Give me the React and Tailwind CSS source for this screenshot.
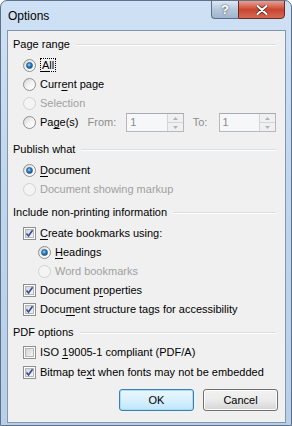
import React from 'react';

const FONT = "font-['Liberation_Sans',Arial,sans-serif]";

function Radio({ checked, disabled }) {
  return (
    <span
      className={`relative flex items-center justify-center w-[13px] h-[13px] shrink-0 rounded-full border ${
        disabled ? 'border-[#cfd2d4] bg-[#f4f4f4]' : 'border-[#8e8f8f] bg-gradient-to-br from-[#d4d4d4] via-[#f4f4f4] to-white'
      }`}
    >
      {checked && (
        <span className="w-[7px] h-[7px] rounded-full bg-[radial-gradient(circle_at_40%_35%,#9fd3f3_0%,#2d7fc0_45%,#0f3f76_100%)] border border-[#1f5b93]" />
      )}
    </span>
  );
}

function Check({ checked }) {
  return (
    <span className="flex items-center justify-center w-[13px] h-[13px] shrink-0 border border-[#8e8f8f] bg-white">
      <span className="relative w-[9px] h-[9px] border border-[#b4b6b8] bg-gradient-to-br from-[#d2d4d6] to-[#f6f6f6]">
        {checked && (
          <svg viewBox="0 0 9 9" className="absolute -left-px -top-px w-[9px] h-[9px]">
            <path d="M1.5 4.5 L3.5 7 L7.6 1.2" fill="none" stroke="#35489a" strokeWidth="1.6" />
          </svg>
        )}
      </span>
    </span>
  );
}

function Header({ children, gap }) {
  return (
    <div className={`flex items-center h-[18px] ${gap}`}>
      <span className="text-black">{children}</span>
      <span className="flex-1 ml-[6px] h-px bg-[#d5dfe5] shadow-[0_1px_0_#fff]" />
    </div>
  );
}

function Row({ indent = 'ml-[10px]', mt = '', children, control }) {
  return (
    <div className={`flex items-center h-[19px] ${indent} ${mt}`}>
      {control}
      <span className="ml-[4px] whitespace-nowrap">{children}</span>
    </div>
  );
}

function U({ children }) {
  return <span className="underline underline-offset-[2px]">{children}</span>;
}

function Spin() {
  return (
    <div className="flex w-[58px] h-[19px] border border-[#b5b9bd] border-t-[#a6abb1] bg-[#f6f7f8]">
      <span className="flex-1 pl-[3px] text-[#8a8a8a] leading-[17px]">1</span>
      <span className="flex flex-col w-[16px] border-l border-[#d3d6d9] bg-[#f0f0f0]">
        <span className="flex-1 flex items-center justify-center border-b border-[#d3d6d9]">
          <svg viewBox="0 0 5 3" className="w-[5px] h-[3px]"><path d="M0 3 L2.5 0 L5 3Z" fill="#b0b4b8" /></svg>
        </span>
        <span className="flex-1 flex items-center justify-center">
          <svg viewBox="0 0 5 3" className="w-[5px] h-[3px]"><path d="M0 0 L2.5 3 L5 0Z" fill="#b0b4b8" /></svg>
        </span>
      </span>
    </div>
  );
}

export default function App() {
  return (
    <div className={`${FONT} text-[11px] w-[292px] h-[426px] overflow-hidden flex flex-col rounded-t-[7px] border border-[#5d7189] bg-gradient-to-b from-[#cfe1f4] via-[#bed5ee] to-[#b7cfe9]`}>
      {/* Title bar */}
      <div className="flex h-[29px] shrink-0">
        <span className="ml-[7px] mt-[6px] text-[12px] text-black">Options</span>
        <div className="ml-auto mr-[6px] flex h-[19px] -mt-px">
          <div className="w-[27px] flex items-center justify-center border border-[#5b6f86] border-r-0 rounded-bl-[4px] bg-gradient-to-b from-[#dce8f4] via-[#b5c7dc] to-[#9fb6d0] text-white font-bold text-[13px] [text-shadow:0_0_2px_#333]">
            ?
          </div>
          <div className="w-[47px] flex items-center justify-center border border-[#6b2a22] rounded-br-[4px] bg-gradient-to-b from-[#e8a093] via-[#c9452f] to-[#d46a53]">
            <svg viewBox="0 0 12 10" className="w-[12px] h-[10px]">
              <path d="M1.5 1 L10.5 9 M10.5 1 L1.5 9" stroke="#4a1a12" strokeWidth="3.4" strokeLinecap="round" />
              <path d="M1.5 1 L10.5 9 M10.5 1 L1.5 9" stroke="#fff" strokeWidth="2.2" strokeLinecap="round" />
            </svg>
          </div>
        </div>
      </div>

      {/* Client area */}
      <div className="ml-[6px] mr-[5px] h-[393px] border border-[#8396ad] bg-[#f0f0f0] pl-[5px] pr-[9px] text-black">
        <Header gap="mt-[4px]">Page range</Header>
        <Row mt="mt-[3px]" control={<Radio checked />}>
          <span className="px-px border border-dotted border-black leading-[15px]"><U>A</U>ll</span>
        </Row>
        <Row control={<Radio />}>Curr<U>e</U>nt page</Row>
        <Row control={<Radio disabled />}><span className="text-[#a0a0a0]">Selection</span></Row>
        <div className="flex items-center h-[19px] ml-[10px]">
          <Radio />
          <span className="ml-[4px] w-[48px]">Pa<U>g</U>e(s)</span>
          <span className="w-[39px] text-[#8d8d8d]">From:</span>
          <Spin />
          <span className="ml-[9px] w-[26px] text-[#8d8d8d]">To:</span>
          <Spin />
        </div>

        <Header gap="mt-[8px]">Publish what</Header>
        <Row mt="mt-[3px]" control={<Radio checked />}><U>D</U>ocument</Row>
        <Row control={<Radio disabled />}><span className="text-[#a0a0a0]">Document showing markup</span></Row>

        <Header gap="mt-[4px]">Include non-printing information</Header>
        <Row mt="mt-[3px]" control={<Check checked />}><U>C</U>reate bookmarks using:</Row>
        <Row indent="ml-[25px]" control={<Radio checked />}><U>H</U>eadings</Row>
        <Row indent="ml-[25px]" control={<Radio disabled />}><span className="text-[#a0a0a0]">Word bookmarks</span></Row>
        <Row control={<Check checked />}>Document p<U>r</U>operties</Row>
        <Row control={<Check checked />}>Docu<U>m</U>ent structure tags for accessibility</Row>

        <Header gap="mt-[4px]">PDF options</Header>
        <Row mt="mt-[2px]" control={<Check />}>ISO <U>1</U>9005-1 compliant (PDF/A)</Row>
        <Row mt="mt-[1px]" control={<Check checked />}>Bitmap te<U>x</U>t when fonts may not be embedded</Row>

        <div className="flex justify-end gap-[9px] mt-[7px] -mr-[2px]">
          <button className="w-[75px] h-[22px] rounded-[3px] border border-[#3c7fb1] bg-gradient-to-b from-[#eaf6fd] via-[#d9f0fc] to-[#bee6fd] shadow-[inset_0_0_0_1px_#a8dcf7]">
            OK
          </button>
          <button className="w-[75px] h-[22px] rounded-[3px] border border-[#707070] bg-gradient-to-b from-[#f2f2f2] via-[#ebebeb] to-[#d5d5d5] shadow-[inset_0_0_0_1px_#fcfcfc]">
            Cancel
          </button>
        </div>
      </div>
    </div>
  );
}
